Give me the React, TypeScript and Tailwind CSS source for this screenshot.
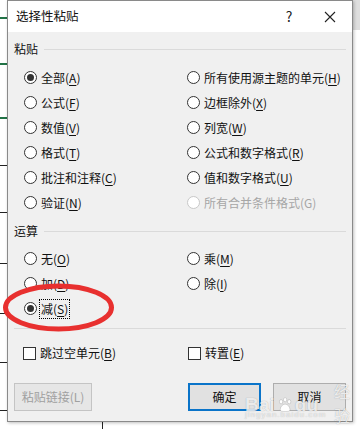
import React from 'react'

// 选择性粘贴 对话框（Excel）
const font = "font-['Noto_Sans_CJK_SC','Microsoft_YaHei',sans-serif]"

function Mn({ text, k, disabled }: { text: string; k: string; disabled?: boolean }) {
  return (
    <span className={disabled ? 'text-[#a6a6a6]' : 'text-[#111]'}>
      {text}(
      {disabled ? k : <span className="underline underline-offset-2 decoration-1">{k}</span>})
    </span>
  )
}

function Radio({ text, k, checked, disabled, focus }: { text: string; k: string; checked?: boolean; disabled?: boolean; focus?: boolean }) {
  return (
    <div className="flex items-center h-[25px] gap-[3px]">
      <span
        className={
          'w-[13px] h-[13px] rounded-full border bg-white flex items-center justify-center shrink-0 ' +
          (disabled ? 'border-[#c8c8c8]' : 'border-[#333]')
        }
      >
        {checked && <span className="w-[7px] h-[7px] rounded-full bg-[#333]" />}
      </span>
      <span className={'px-[1px] leading-[18px] ' + (focus ? 'outline outline-1 outline-dotted outline-black' : '')}>
        <Mn text={text} k={k} disabled={disabled} />
      </span>
    </div>
  )
}

function Check({ text, k }: { text: string; k: string }) {
  return (
    <div className="flex items-center gap-[4px] h-[20px]">
      <span className="w-[13px] h-[13px] border border-[#333] bg-white shrink-0" />
      <span className="leading-[18px]">
        <Mn text={text} k={k} />
      </span>
    </div>
  )
}

function Group({ title }: { title: string }) {
  return (
    <div className="flex items-center h-[16px] gap-[6px]">
      <span className="leading-[16px] text-[#111]">{title}</span>
      <span className="flex-1 h-px bg-[#dadada]" />
    </div>
  )
}

export default function App() {
  return (
    <div className={'relative w-[360px] h-[429px] bg-white overflow-hidden text-[12px] ' + font}>
      {/* 背景中的表格线 */}
      <div className="absolute left-[353px] top-0 w-[7px] h-[30px] bg-[#dedede]" />
      {[17, 63, 117].map((y) => (
        <div key={y} className="absolute left-0 w-[7px] h-[2px] bg-[#217346]" style={{ top: y }} />
      ))}
      {[165, 212, 263, 313, 362, 410].map((y) => (
        <div key={y} className="absolute left-0 w-[7px] h-px bg-[#222]" style={{ top: y }} />
      ))}
      <div className="absolute left-[102px] top-[422px] w-px h-[7px] bg-[#222]" />

      {/* 对话框 */}
      <div className="absolute left-[7px] top-0 w-[346px] h-[422px] border border-[#8a8a8a] bg-[#f0f0f0] shadow-[1px_1px_3px_rgba(0,0,0,0.25)] flex flex-col">
        <div className="h-[31px] bg-white flex items-center pl-[8px] shrink-0">
          <span className="text-[12.5px] text-[#111] flex-1">选择性粘贴</span>
          <span className="w-[20px] text-center text-[14px] text-[#222] mr-[25px]">?</span>
          <svg width="12" height="12" viewBox="0 0 12 12" className="mr-[16px]">
            <path d="M1 1L11 11M11 1L1 11" stroke="#222" strokeWidth="1.1" />
          </svg>
        </div>

        <div className="flex flex-col px-[6px] pt-[9px]">
          <Group title="粘贴" />
          <div className="grid grid-cols-[163px_1fr] pl-[10px] mt-[8px]">
            <div className="flex flex-col">
              <Radio text="全部" k="A" checked />
              <Radio text="公式" k="F" />
              <Radio text="数值" k="V" />
              <Radio text="格式" k="T" />
              <Radio text="批注和注释" k="C" />
              <Radio text="验证" k="N" />
            </div>
            <div className="flex flex-col">
              <Radio text="所有使用源主题的单元" k="H" />
              <Radio text="边框除外" k="X" />
              <Radio text="列宽" k="W" />
              <Radio text="公式和数字格式" k="R" />
              <Radio text="值和数字格式" k="U" />
              <Radio text="所有合并条件格式" k="G" disabled />
            </div>
          </div>

          <div className="mt-[8px]">
            <Group title="运算" />
          </div>
          <div className="grid grid-cols-[163px_1fr] pl-[10px] mt-[7px]">
            <div className="flex flex-col gap-[-1px]">
              <Radio text="无" k="O" />
              <Radio text="加" k="D" />
              <Radio text="减" k="S" checked focus />
            </div>
            <div className="flex flex-col">
              <Radio text="乘" k="M" />
              <Radio text="除" k="I" />
            </div>
          </div>

          <div className="h-px bg-[#dadada] mt-[7px]" />
          <div className="grid grid-cols-[165px_1fr] pl-[9px] mt-[14px]">
            <Check text="跳过空单元" k="B" />
            <Check text="转置" k="E" />
          </div>

          <div className="flex items-center mt-[20px]">
            <div className="w-[78px] h-[28px] border border-[#c4c4c4] bg-[#e6e6e6] text-[#a0a0a0] flex items-center justify-center">
              粘贴链接(L)
            </div>
            <div className="flex-1" />
            <div className="w-[73px] h-[28px] border-2 border-[#0a74c9] bg-[#e1e1e1] text-[#111] flex items-center justify-center mr-[12px]">
              确定
            </div>
            <div className="relative w-[73px] h-[28px] border border-[#adadad] bg-[#e1e1e1] text-[#111] flex items-center justify-center">
              取消
            </div>
          </div>
        </div>
      </div>

      {/* 百度经验水印 */}
      <div className="absolute left-[245px] top-[381px] flex items-center gap-[2px] text-[19px] font-bold text-white/80 [text-shadow:0_0_1px_rgba(0,0,0,0.35)] font-['Liberation_Sans','Noto_Sans_CJK_SC',sans-serif]">
        <span>Bai</span>
        <svg width="20" height="20" viewBox="0 0 20 20">
          <g fill="white" stroke="rgba(0,0,0,0.25)" strokeWidth="0.6">
            <ellipse cx="5" cy="6" rx="2" ry="2.6" />
            <ellipse cx="10" cy="3.5" rx="2" ry="2.6" />
            <ellipse cx="15" cy="6" rx="2" ry="2.6" />
            <path d="M4 16c0-4 3-7 6-7s6 3 6 7c0 2-3 2-6 2s-6 0-6-2z" />
          </g>
        </svg>
        <span>du</span>
        <span className="ml-[14px] text-[16px] font-normal">经验</span>
      </div>
      <div className="absolute left-[245px] top-[409px] text-[8px] text-white/70 tracking-[1px] [text-shadow:0_0_1px_rgba(0,0,0,0.3)] font-['Liberation_Sans',sans-serif]">
        jingyan.baidu.com
      </div>

      {/* 红色圈注 */}
      <svg className="absolute left-[2px] top-[283px]" width="113" height="50" viewBox="0 0 113 50">
        <ellipse cx="56.5" cy="24.5" rx="53" ry="21.5" fill="none" stroke="#e8302f" strokeWidth="5" />
      </svg>
    </div>
  )
}
